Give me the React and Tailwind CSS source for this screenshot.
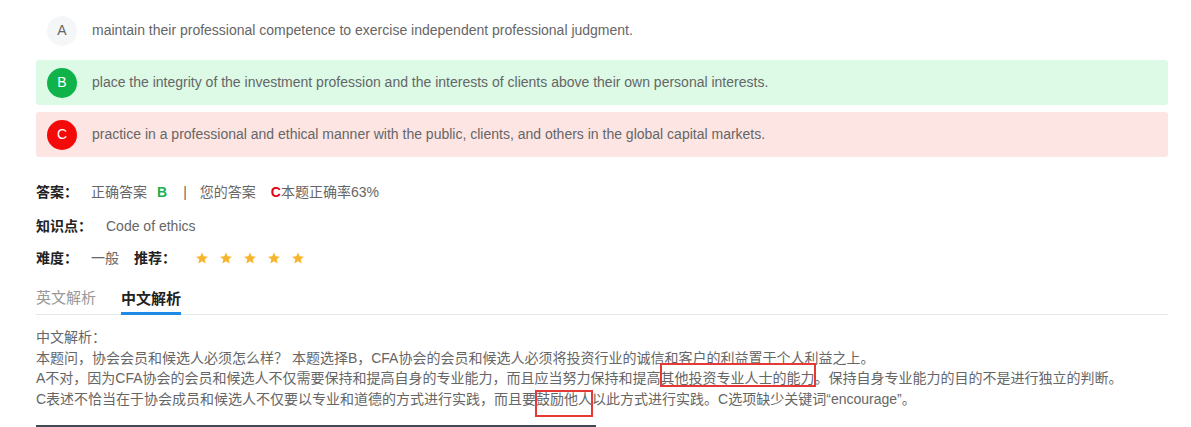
import React from 'react';

const options = [
  { key: 'A', text: 'maintain their professional competence to exercise independent professional judgment.', state: 'none' },
  { key: 'B', text: 'place the integrity of the investment profession and the interests of clients above their own personal interests.', state: 'right' },
  { key: 'C', text: 'practice in a professional and ethical manner with the public, clients, and others in the global capital markets.', state: 'wrong' },
];

const Star = () => (
  <svg width="14" height="14" viewBox="0 0 24 24" className="shrink-0">
    <path d="M12 2.5l2.9 6.6 7.1.6-5.4 4.7 1.6 7-6.2-3.7-6.2 3.7 1.6-7L2 9.7l7.1-.6z" fill="#f7b52c" />
  </svg>
);

// red annotation box drawn over the text
const Marked = ({ children, top, bottom }) => (
  <span className="relative">
    {children}
    <span className={`absolute left-[-1px] right-[-1px] border-2 border-[#e53935] pointer-events-none ${top} ${bottom}`} />
  </span>
);

const OptionRow = ({ opt }) => {
  const rowBg = opt.state === 'right' ? 'bg-[#dcfae6]' : opt.state === 'wrong' ? 'bg-[#fde5e3]' : '';
  const circle =
    opt.state === 'right'
      ? 'bg-[#0fb34a] text-white'
      : opt.state === 'wrong'
      ? 'bg-[#f50a0a] text-white'
      : 'bg-[#f4f6f8] text-[#666]';
  return (
    <div className={`flex items-center h-[45px] rounded-[3px] pl-[11px] ${rowBg}`}>
      <div className={`w-[30px] h-[30px] rounded-full flex items-center justify-center text-[14px] ${circle}`}>
        {opt.key}
      </div>
      <div className="ml-[15px] text-[14px] text-[#666]">{opt.text}</div>
    </div>
  );
};

export default function App() {
  return (
    <div className="bg-white w-[1191px] h-[427px] overflow-hidden font-['Liberation_Sans','Noto_Sans_CJK_SC',sans-serif]">
      <div className="ml-[36px] w-[1132px] pt-[8px]">
        {/* options */}
        <div className="flex flex-col gap-[7px]">
          {options.map(opt => (
            <OptionRow key={opt.key} opt={opt} />
          ))}
        </div>

        {/* answer info */}
        <div className="mt-[25px] flex items-center h-[20px] text-[14px]">
          <span className="font-bold text-[#222] w-[55px]">答案：</span>
          <span className="text-[#666]">正确答案</span>
          <span className="ml-[10px] font-bold text-[#19b14c]">B</span>
          <span className="ml-[16px] text-[#666]">|</span>
          <span className="ml-[13px] text-[#666]">您的答案</span>
          <span className="ml-[15px] font-bold text-[#e60012]">C</span>
          <span className="text-[#666]">本题正确率63%</span>
        </div>

        <div className="mt-[14px] flex items-center h-[20px] text-[14px]">
          <span className="font-bold text-[#222] w-[70px]">知识点：</span>
          <span className="text-[#666]">Code of ethics</span>
        </div>

        <div className="mt-[12px] flex items-center h-[20px] text-[14px]">
          <span className="font-bold text-[#222] w-[55px]">难度：</span>
          <span className="text-[#666]">一般</span>
          <span className="ml-[15px] font-bold text-[#222]">推荐：</span>
          <div className="ml-[19px] flex items-center gap-[10px]">
            <Star />
            <Star />
            <Star />
            <Star />
            <Star />
          </div>
        </div>

        {/* tabs */}
        <div className="mt-[20px] flex items-end border-b border-[#e4e7ea] text-[15px] leading-[20px]">
          <div className="pb-[6px] text-[#999]">英文解析</div>
          <div className="ml-[25px] pb-[3px] font-bold text-[#222] border-b-[3px] border-[#1f8ae6] mb-[-1px]">中文解析</div>
        </div>

        {/* analysis */}
        <div className="mt-[12px] text-[14px] leading-[20.5px] text-[#666]">
          <div>中文解析：</div>
          <div>本题问，协会会员和候选人必须怎么样？ 本题选择B，CFA协会的会员和候选人必须将投资行业的诚信和客户的利益置于个人利益之上。</div>
          <div>
            A不对，因为CFA协会的会员和候选人不仅需要保持和提高自身的专业能力，而且应当努力保持和提高
            <Marked top="top-[-7px]" bottom="bottom-[-1px]">其他投资专业人士的能力</Marked>
            。保持自身专业能力的目的不是进行独立的判断。
          </div>
          <div>
            C表述不恰当在于协会成员和候选人不仅要以专业和道德的方式进行实践，而且要
            <Marked top="top-[-1px]" bottom="bottom-[-10px]">鼓励他人</Marked>
            以此方式进行实践。C选项缺少关键词“encourage”。
          </div>
        </div>

        <div className="mt-[16px] w-[560px] h-[10px] bg-[#3f4a54]" />
      </div>
    </div>
  );
}
